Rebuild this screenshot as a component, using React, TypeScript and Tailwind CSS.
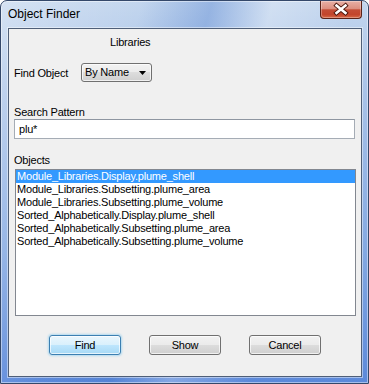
import React from 'react';

const items = [
  'Module_Libraries.Display.plume_shell',
  'Module_Libraries.Subsetting.plume_area',
  'Module_Libraries.Subsetting.plume_volume',
  'Sorted_Alphabetically.Display.plume_shell',
  'Sorted_Alphabetically.Subsetting.plume_area',
  'Sorted_Alphabetically.Subsetting.plume_volume',
];

function CloseButton() {
  return (
    <div className="w-[42px] h-[18px] rounded-b-[4px] border border-t-0 border-[#5a2218] bg-[linear-gradient(180deg,#e8b0a6_0%,#dc8f80_45%,#c44d36_52%,#c3452c_80%,#d86a48_100%)] shadow-[inset_0_0_0_1px_rgba(255,255,255,0.3)]">
      <svg width="40" height="17" viewBox="0 0 40 17">
        <path d="M15.5 4.5 L24.5 12 M24.5 4.5 L15.5 12" stroke="#4a140a" strokeWidth="4.4" strokeLinecap="square" />
        <path d="M15.5 4.5 L24.5 12 M24.5 4.5 L15.5 12" stroke="#ffffff" strokeWidth="2.6" strokeLinecap="square" />
      </svg>
    </div>
  );
}

function DialogButton({ label, primary }: { label: string; primary?: boolean }) {
  return (
    <button
      className={`w-[72px] h-[20px] rounded-[3px] border text-[11px] leading-[18px] text-black ${
        primary
          ? 'border-[#3c7fb1] bg-[linear-gradient(180deg,#eaf6fd_0%,#d9f0fc_50%,#bee6fd_50%,#a7d9f5_100%)] shadow-[inset_0_0_0_1px_rgba(255,255,255,0.7),0_0_2px_1px_rgba(100,190,240,0.45)]'
          : 'border-[#707070] bg-[linear-gradient(180deg,#f2f2f2_0%,#ebebeb_50%,#dddddd_50%,#cfcfcf_100%)] shadow-[inset_0_0_0_1px_rgba(255,255,255,0.7)]'
      }`}
    >
      {label}
    </button>
  );
}

export default function App() {
  return (
    <div className="w-[369px] h-[384px] bg-white font-['Liberation_Sans',Arial,sans-serif] tracking-[-0.2px] text-black">
      <div className="flex flex-col w-full h-full rounded-t-[7px] border border-[#34486a] shadow-[inset_0_0_0_1px_rgba(255,255,255,0.45)] bg-[linear-gradient(105deg,rgba(255,255,255,0.3)_0%,rgba(255,255,255,0)_30%,rgba(70,120,205,0.35)_45%,rgba(255,255,255,0.25)_58%,rgba(255,255,255,0)_75%),linear-gradient(180deg,#c3d6ee_0%,#a8c2e8_25%,#84a9e2_65%,#5c89da_100%)]">
        <div className="flex h-[27px] items-start justify-between">
          <span className="ml-[7px] mt-[5px] text-[12px] leading-[16px] tracking-normal">Object Finder</span>
          <div className="mr-[6px]">
            <CloseButton />
          </div>
        </div>

        <div className="flex flex-1 flex-col mx-[6px] ml-[7px] mb-[6px] border border-[#4f5f78] bg-[#f0f0f0] px-[5px] text-[11px] leading-[13px] shadow-[0_0_0_1px_rgba(255,255,255,0.45)]">
          <div className="mt-[7px] ml-[96px]">Libraries</div>

          <div className="mt-[14px] flex items-center">
            <span className="w-[67px] mt-[2px]">Find Object</span>
            <div className="flex h-[19px] w-[71px] items-center justify-between rounded-[3px] border border-[#707070] bg-[linear-gradient(180deg,#f2f2f2_0%,#ebebeb_50%,#dddddd_50%,#cfcfcf_100%)] pl-[3px] pr-[5px] shadow-[inset_0_0_0_1px_rgba(255,255,255,0.7)]">
              <span>By Name</span>
              <svg width="7" height="4" viewBox="0 0 7 4">
                <path d="M0 0 H7 L3.5 4 Z" fill="#000" />
              </svg>
            </div>
          </div>

          <div className="mt-[24px]">Search Pattern</div>
          <div className="flex h-[20px] w-[341px] items-center border border-[#a5acb5] border-t-[#8e96a1] bg-white pl-[4px]">
            plu*
          </div>

          <div className="mt-[15px]">Objects</div>
          <div className="mt-[2px] ml-[1px] h-[147px] w-[341px] border border-[#828790] bg-white">
            {items.map((item, i) => (
              <div
                key={item}
                className={`h-[13px] pl-[1px] leading-[13px] ${i === 0 ? 'bg-[#3399ff] text-white' : ''}`}
              >
                {item}
              </div>
            ))}
          </div>

          <div className="mt-[19px] flex justify-center gap-[28px]">
            <DialogButton label="Find" primary />
            <DialogButton label="Show" />
            <DialogButton label="Cancel" />
          </div>
        </div>
      </div>
    </div>
  );
}
